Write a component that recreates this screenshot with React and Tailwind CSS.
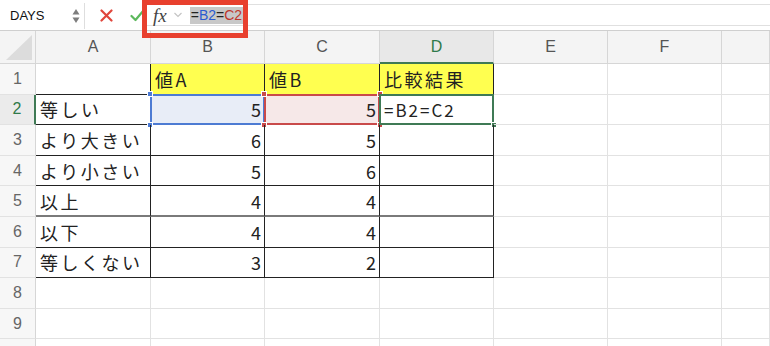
import React from 'react';
import clsx from 'clsx';

const cols = ['A', 'B', 'C', 'D', 'E', 'F', ''];

const rows = [
    ['', '値A', '値B', '比較結果'],
    ['等しい', '5', '5', '=B2=C2'],
    ['より大きい', '6', '5', ''],
    ['より小さい', '5', '6', ''],
    ['以上', '4', '4', ''],
    ['以下', '4', '4', ''],
    ['等しくない', '3', '2', ''],
    [], [], [],
];

const jp = { fontFamily: '"Noto Sans CJK JP", "Noto Sans", sans-serif' };

const Handle = ({ pos, color }) => (
    <span className={clsx('absolute w-[6px] h-[6px] border border-white', color, pos)} />
);

const Cell = ({ r, c, value }) => {
    const inTable = (r === 0 && c >= 1 && c <= 3) || (r >= 1 && r <= 6 && c <= 3);
    const yellow = r === 0 && c >= 1 && c <= 3;
    const numeric = r >= 1 && (c === 1 || c === 2);
    const blackRight = inTable || (r === 0 && c === 0);
    const blackBottom = (inTable && r >= 1) || (r === 0 && c === 0) || yellow;
    const heavyBottom = r === 4 && c <= 3;

    return (
        <div
            className={clsx(
                'relative flex items-center border-r border-b text-[#222] leading-none',
                blackRight ? 'border-r-[#222]' : 'border-r-[#e2e2e2]',
                heavyBottom ? 'border-b-2 border-b-[#7a7a7a]' : blackBottom ? 'border-b-[#222]' : 'border-b-[#e2e2e2]',
                yellow && 'bg-[#ffff50]',
                r === 1 && c === 1 && 'bg-[#e8edf7]',
                r === 1 && c === 2 && 'bg-[#f6e8e8]',
                numeric ? 'justify-end pr-[3px] text-[18px]' : 'pl-[4px] text-[18px] tracking-[2.5px]',
                r === 1 && c === 3 && '!text-[17px] !tracking-[2px]'
            )}
            style={jp}
        >
            {value}
            {r === 1 && c === 1 && (
                <>
                    <span className="absolute -inset-px border-2 border-[#4d7bd3]" />
                    <Handle pos="-left-[4px] -top-[4px]" color="bg-[#4d7bd3]" />
                    <Handle pos="-left-[4px] -bottom-[4px]" color="bg-[#4d7bd3]" />
                </>
            )}
            {r === 1 && c === 2 && (
                <>
                    <span className="absolute -inset-px border-2 border-[#c94a4a]" />
                    <Handle pos="-left-[4px] -top-[4px]" color="bg-[#c94a4a]" />
                    <Handle pos="-right-[4px] -top-[4px]" color="bg-[#c94a4a]" />
                    <Handle pos="-left-[4px] -bottom-[4px]" color="bg-[#c94a4a]" />
                    <Handle pos="-right-[4px] -bottom-[4px]" color="bg-[#c94a4a]" />
                </>
            )}
            {r === 1 && c === 3 && (
                <>
                    <span className="absolute -inset-px border-2 border-[#3f7a55]" />
                    <Handle pos="-right-[4px] -bottom-[4px]" color="bg-[#3f7a55]" />
                </>
            )}
        </div>
    );
};

export default function App() {
    return (
        <div className="relative w-[770px] h-[346px] overflow-hidden bg-white" style={{ fontFamily: '"Liberation Sans", Arial, sans-serif' }}>
            {/* Toolbar */}
            <div className="flex items-center h-[31px] border-b border-[#cfcfcf] bg-white">
                <div className="flex items-center justify-between w-[85px] h-[26px] mt-[1px] bg-white border-r border-[#dedede] pl-[10px] pr-[4px]">
                    <span className="text-[13px] text-[#111]">DAYS</span>
                    <svg width="8" height="16" viewBox="0 0 8 16">
                        <path d="M4 1 L7.5 6.5 L0.5 6.5 Z" fill="#7d7d7d" />
                        <path d="M4 15 L7.5 9.5 L0.5 9.5 Z" fill="#7d7d7d" />
                    </svg>
                </div>
                <div className="flex items-center gap-[17px] pl-[15px] w-[62px]">
                    <svg width="13" height="13" viewBox="0 0 13 13">
                        <path d="M1.5 1.5 L11.5 11.5 M11.5 1.5 L1.5 11.5" stroke="#e0463c" strokeWidth="2.2" strokeLinecap="round" />
                    </svg>
                    <svg width="15" height="13" viewBox="0 0 15 13">
                        <path d="M1.5 7 L5.5 11 L13.5 1.5" stroke="#5cb85c" strokeWidth="2.2" fill="none" strokeLinecap="round" strokeLinejoin="round" />
                    </svg>
                </div>
                <div className="flex-1 flex items-center h-[22px] border-y border-[#e0e0e0] pl-[6px]">
                    <span className="text-[19px] italic text-[#444] leading-none" style={{ fontFamily: '"Liberation Serif", serif' }}>fx</span>
                    <svg width="10" height="8" viewBox="0 0 10 8" className="ml-[6px]">
                        <path d="M1.5 2 L5 5.5 L8.5 2" stroke="#c4c4c4" strokeWidth="1.2" fill="none" />
                    </svg>
                    <span className="ml-[7px] px-[1px] bg-[#c8c8c8] text-[14px] leading-[17px]">
                        <span className="text-[#222]">=</span>
                        <span className="text-[#2b5bd0]">B2</span>
                        <span className="text-[#222]">=</span>
                        <span className="text-[#c0362c]">C2</span>
                    </span>
                </div>
            </div>

            {/* Grid */}
            <div className="grid grid-cols-[36px_115px_114px_115px_114px_114px_114px_1fr] grid-rows-[33px_repeat(10,30.6px)]">
                <div className="relative bg-[#f4f4f4] border-r border-b border-[#d6d6d6]">
                    <svg className="absolute right-[3px] bottom-[3px]" width="26" height="25" viewBox="0 0 26 25">
                        <path d="M26 0 L26 25 L0 25 Z" fill="#dcdcdc" />
                    </svg>
                </div>
                {cols.map((c, i) => (
                    <div
                        key={i}
                        className={clsx(
                            'flex items-center justify-center text-[16px] border-r',
                            i === 3
                                ? 'bg-[#e8e8e8] text-[#2f7a4a] border-b-2 border-b-[#3f7a55] border-r-[#d6d6d6]'
                                : 'bg-[#f4f4f4] text-[#555] border-b border-[#d6d6d6]'
                        )}
                    >
                        {c}
                    </div>
                ))}
                {rows.map((row, r) => (
                    <React.Fragment key={r}>
                        <div
                            className={clsx(
                                'flex items-center justify-center text-[16px] border-b border-b-[#e2e2e2] border-r',
                                r === 1
                                    ? 'bg-[#ebebeb] text-[#2f7a4a] border-r-2 border-r-[#3f7a55]'
                                    : 'bg-[#f7f7f7] text-[#666] border-r-[#d6d6d6]'
                            )}
                        >
                            {r < 9 ? r + 1 : ''}
                        </div>
                        {cols.map((_, c) => (
                            <Cell key={c} r={r} c={c} value={row[c] || ''} />
                        ))}
                    </React.Fragment>
                ))}
            </div>

            {/* Highlight box around formula */}
            <div className="absolute left-[142px] top-0 w-[106px] h-[38px] border-[5px] border-[#e8402e]" />
        </div>
    );
}
